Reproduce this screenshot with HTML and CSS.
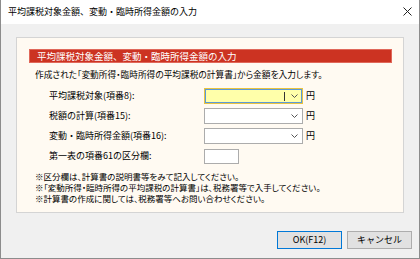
FILE: index.html
```html
<!DOCTYPE html>
<html lang="ja">
<head>
<meta charset="utf-8">
<link rel="stylesheet" href="styles.css">
</head>
<body>
<div class="window">
  <div class="titlebar">
    <span class="title">平均課税対象金額、変動・臨時所得金額の入力</span>
    <svg class="close" width="9" height="9" viewBox="0 0 9 9"><path d="M0.5 0.5L8.5 8.5M8.5 0.5L0.5 8.5" stroke="#222" stroke-width="1" fill="none"/></svg>
  </div>
  <div class="content">
    <div class="panel">
      <div class="banner">平均課税対象金額、変動・臨時所得金額の入力</div>
      <p class="desc">作成された「変動所得・臨時所得の平均課税の計算書」から金額を入力します。</p>
      <div class="form">
        <div class="label">平均課税対象(項番8):</div>
        <div class="field">
          <div class="combo focused"><span class="caret"></span><svg class="chev" width="7" height="4" viewBox="0 0 7 4"><path d="M0.5 0.5L3.5 3.5L6.5 0.5" stroke="#555" fill="none"/></svg></div>
          <span class="unit">円</span>
        </div>
        <div class="label">税額の計算(項番15):</div>
        <div class="field">
          <div class="combo"><svg class="chev" width="7" height="4" viewBox="0 0 7 4"><path d="M0.5 0.5L3.5 3.5L6.5 0.5" stroke="#555" fill="none"/></svg></div>
          <span class="unit">円</span>
        </div>
        <div class="label">変動・臨時所得金額(項番16):</div>
        <div class="field">
          <div class="combo"><svg class="chev" width="7" height="4" viewBox="0 0 7 4"><path d="M0.5 0.5L3.5 3.5L6.5 0.5" stroke="#555" fill="none"/></svg></div>
          <span class="unit">円</span>
        </div>
        <div class="label">第一表の項番61の区分欄:</div>
        <div class="field">
          <div class="smallbox"></div>
        </div>
      </div>
      <div class="notes">
        <p>※区分欄は、計算書の説明書等をみて記入してください。</p>
        <p>※「変動所得・臨時所得の平均課税の計算書」は、税務署等で入手してください。</p>
        <p>※計算書の作成に関しては、税務署等へお問い合わせください。</p>
      </div>
    </div>
  </div>
  <div class="footer">
    <button class="btn primary">OK(F12)</button>
    <button class="btn">キャンセル</button>
  </div>
</div>
</body>
</html>
```
FILE: styles.css
```css
* { box-sizing: border-box; }
html, body { margin: 0; padding: 0; }
body {
  width: 420px;
  height: 259px;
  overflow: hidden;
  font-family: "Noto Sans CJK JP", "Noto Sans", sans-serif;
  color: #000;
}
.window {
  width: 420px;
  height: 259px;
  border: 1px solid #8c8c8c;
  border-top: none;
  background: #f0f0f0;
  display: flex;
  flex-direction: column;
}
.titlebar {
  height: 24px;
  background: #fff;
  display: flex;
  align-items: center;
  justify-content: space-between;
  padding: 0 7px 0 7px;
}
.title {
  font-size: 9px;
  line-height: 12px;
  margin-top: -1px;
}
.close { margin-top: -1px; }
.content {
  padding: 13px 15px 0 15px;
}
.panel {
  width: 388px;
  height: 176px;
  border: 1px solid #d4d4d4;
  background: #fffaf2;
  padding: 11px 11px 0 12px;
}
.banner {
  height: 14px;
  background: #cc3322;
  border: 1px solid #e0685a;
  color: #fff;
  font-size: 9.5px;
  line-height: 12px;
  padding-left: 7px;
}
.desc {
  margin: 6px 0 0 6px;
  font-size: 8.7px;
  line-height: 12px;
  height: 12px;
  white-space: nowrap;
  font-feature-settings: "palt";
}
.form {
  margin: 7px 0 0 20px;
  display: grid;
  grid-template-columns: 155px auto;
  row-gap: 4px;
  align-items: center;
}
.label {
  font-size: 9px;
  line-height: 12px;
  white-space: nowrap;
}
.field {
  display: flex;
  align-items: center;
  height: 16px;
}
.combo {
  width: 99px;
  height: 16px;
  border: 1px solid #acacac;
  background: #fff;
  display: flex;
  align-items: center;
  justify-content: flex-end;
  padding-right: 4px;
}
.combo.focused {
  border-color: #e8c341;
  box-shadow: inset 0 0 0 1px #5b9ad8;
  background: #ffffaa;
}
.caret {
  width: 1px;
  height: 9px;
  background: #333;
  margin-right: 6px;
}
.unit {
  font-size: 9px;
  line-height: 12px;
  margin-left: 3px;
}
.smallbox {
  width: 35px;
  height: 15px;
  border: 1px solid #acacac;
  background: #fff;
}
.notes {
  margin: 7px 0 0 6px;
}
.notes p {
  margin: 0;
  font-size: 8.5px;
  line-height: 11px;
  height: 11px;
  white-space: nowrap;
  font-feature-settings: "palt";
}
.footer {
  flex: 1;
  display: flex;
  justify-content: flex-end;
  align-items: flex-start;
  padding: 18px 7px 0 0;
  gap: 5px;
}
.btn {
  width: 65px;
  height: 18px;
  margin: 0;
  padding: 0;
  border: 1px solid #adadad;
  background: #e1e1e1;
  font-family: "Noto Sans CJK JP", "Noto Sans", sans-serif;
  font-size: 9px;
  line-height: 14px;
  color: #000;
}
.btn.primary {
  border-color: #0078d7;
}
```
